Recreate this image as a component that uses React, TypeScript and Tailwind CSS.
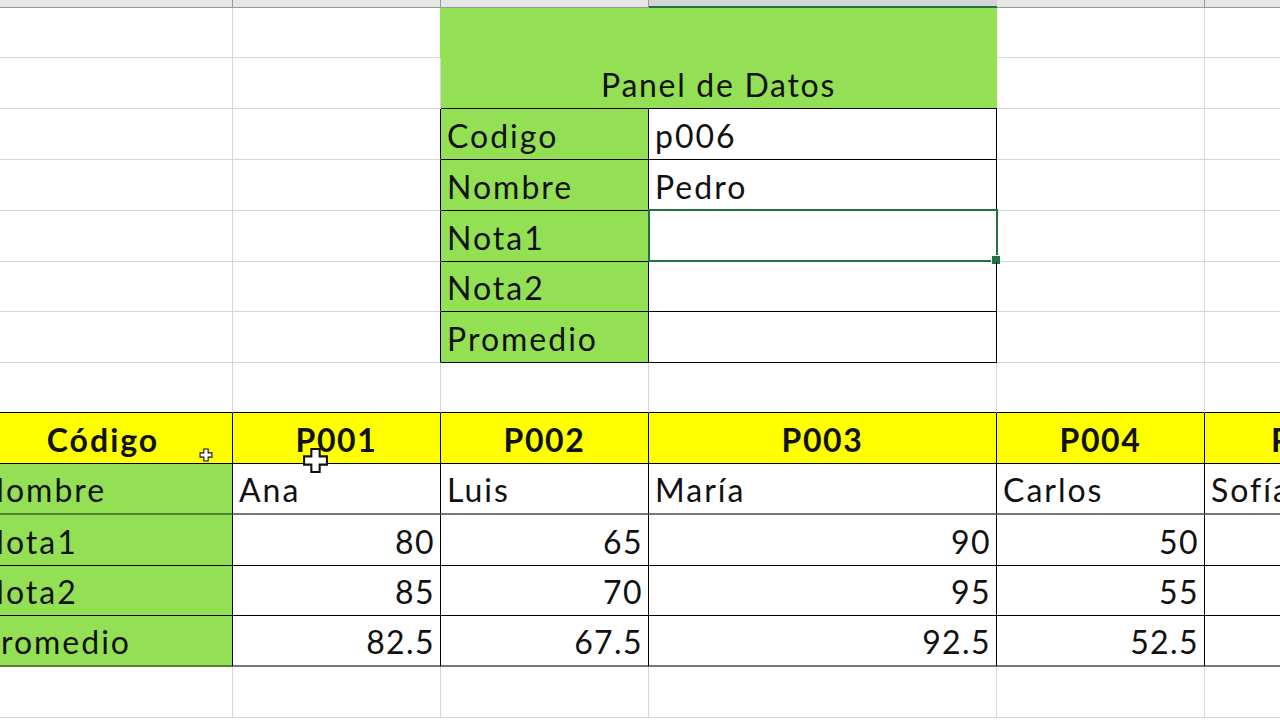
import type { ReactNode } from "react";

const black = "border-r border-b border-black";
const light = "border-r border-b border-[#d6d6d6]";
const green = "bg-[#94e054]";
const header = "justify-center bg-[#ffff00] font-bold tracking-[1.6px]";

function Cell({
  children,
  className = "",
}: {
  children?: ReactNode;
  className?: string;
}) {
  return (
    <div className={`flex items-end overflow-hidden whitespace-nowrap px-[6px] pb-[7px] ${className}`}>
      {children}
    </div>
  );
}

function Blank({ n = 1, className = light }: { n?: number; className?: string }) {
  return (
    <>
      {Array.from({ length: n }).map((_, i) => (
        <div key={i} className={className} />
      ))}
    </>
  );
}

function CrossCursor({ size, className }: { size: number; className: string }) {
  return (
    <svg width={size} height={size} viewBox="0 0 26 26" className={`absolute ${className}`}>
      <path
        d="M9 2h8v7h7v8h-7v7H9v-7H2V9h7z"
        fill="#fff"
        stroke="#111"
        strokeWidth="2"
      />
    </svg>
  );
}

const panelRows = ["Codigo", "Nombre", "Nota1", "Nota2", "Promedio"];
const panelValues = ["p006", "Pedro", "", "", ""];

const tableRows = [
  { label: "Nombre", values: ["Ana", "Luis", "María", "Carlos", "Sofía"], text: true, thick: true },
  { label: "Nota1", values: ["80", "65", "90", "50", ""], text: false, thick: false },
  { label: "Nota2", values: ["85", "70", "95", "55", ""], text: false, thick: false },
  { label: "Promedio", values: ["82.5", "67.5", "92.5", "52.5", ""], text: false, thick: true },
];

export default function App() {
  return (
    <div className="relative h-[720px] w-[1280px] overflow-hidden bg-white font-['Lato','Liberation_Sans',sans-serif] text-[32px] leading-none tracking-[1.4px] text-[#111]">
      <div className="-ml-[26px] grid w-[1400px] grid-cols-[259px_208px_208px_348px_208px_169px] grid-rows-[8px_50px_51px_51px_51px_51px_50px_51px_50px_51px_51px_51px_50px_51px_51px]">
        {/* column header strip */}
        <div className="border-r border-b border-[#9a9a9a] bg-[#e6e6e6]" />
        <div className="border-r border-b border-[#9a9a9a] bg-[#e6e6e6]" />
        <div className="border-r border-b border-[#9a9a9a] bg-[#e6e6e6]" />
        <div className="border-b-2 border-[#217346] bg-[#d4d4d4]" />
        <div className="border-r border-b border-[#9a9a9a] bg-[#e6e6e6]" />
        <div className="border-b border-[#9a9a9a] bg-[#e6e6e6]" />

        {/* panel title, merged over two rows */}
        <Blank />
        <Blank />
        <div className="row-span-2 -ml-px" style={{ gridColumn: "3 / span 2" }}>
          <div className={`flex h-full items-end justify-center border-b border-black pb-[7px] tracking-[1.7px] ${green}`}>
            Panel de Datos
          </div>
        </div>
        <Blank n={2} />

        <Blank n={2} />
        <Blank n={2} />

        {/* panel body */}
        {panelRows.map((label, i) => (
          <div key={label} className="contents">
            <Blank />
            <div className="border-r border-b border-r-black border-b-[#d6d6d6]" />
            <Cell className={`${black} ${green} tracking-[2px]`}>{label}</Cell>
            <div className={`relative ${black}`}>
              <Cell className="h-full tracking-[2px]">{panelValues[i]}</Cell>
              {i === 2 && (
                <>
                  <div className="absolute -top-[2px] -left-px -right-[2px] -bottom-px border-2 border-[#217346]" />
                  <div className="absolute -right-[5px] -bottom-[4px] h-[10px] w-[10px] border border-white bg-[#217346]" />
                </>
              )}
            </div>
            <Blank n={2} />
          </div>
        ))}

        {/* spacer row, its bottom edge is the top of the table */}
        <Blank n={5} className="border-r border-b border-r-[#d6d6d6] border-b-black" />
        <Blank className="border-b border-black" />

        {/* data table */}
        <Cell className={`${black} ${header} tracking-[2px]`}>Código</Cell>
        <Cell className={`${black} ${header}`}>P001</Cell>
        <Cell className={`${black} ${header}`}>P002</Cell>
        <Cell className={`${black} ${header}`}>P003</Cell>
        <Cell className={`${black} ${header}`}>P004</Cell>
        <Cell className="border-b border-black bg-[#ffff00] pl-[66px] font-bold tracking-[1.6px]">P005</Cell>

        {tableRows.map((row) => (
          <div key={row.label} className="contents">
            <Cell
              className={`${green} tracking-[2px] border-r border-r-black ${row.thick ? "border-b-2 border-b-[#55803a]" : "border-b border-b-black"}`}
            >
              {row.label}
            </Cell>
            {row.values.map((v, i) => (
              <Cell
                key={i}
                className={`${i === 4 ? "" : "border-r border-r-black"} ${row.thick ? "border-b-2 border-b-[#7a7a7a]" : "border-b border-b-black"} ${row.text ? "tracking-[2px]" : "justify-end pr-[5px]"}`}
              >
                {v}
              </Cell>
            ))}
          </div>
        ))}

        {/* empty rows below */}
        <Blank n={6} />
      </div>

      <CrossCursor size={14} className="left-[199px] top-[448px]" />
      <CrossCursor size={27} className="left-[302px] top-[447px]" />
    </div>
  );
}
